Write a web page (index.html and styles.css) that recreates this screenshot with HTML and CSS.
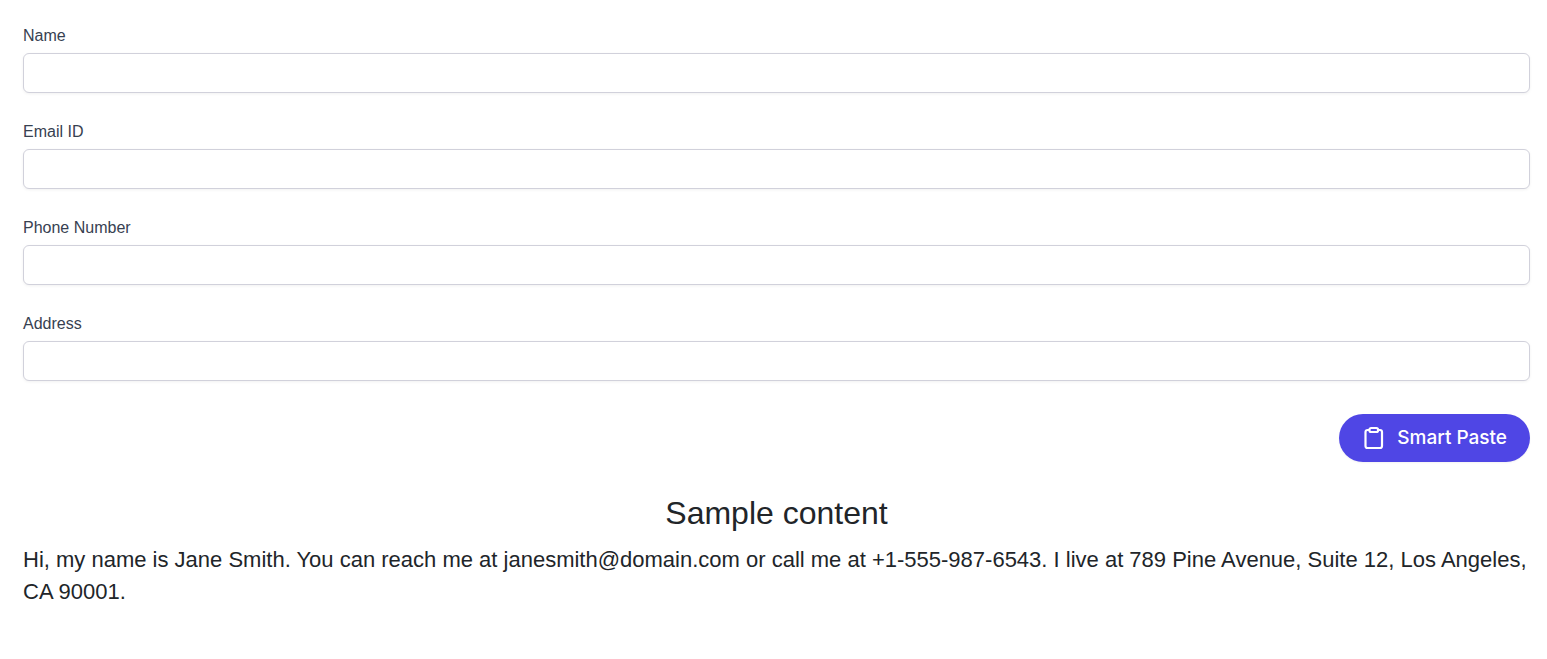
FILE: index.html
```html
<!DOCTYPE html>
<html lang="en">
<head>
<meta charset="utf-8">
<title>Smart Paste</title>
<link rel="stylesheet" href="styles.css">
</head>
<body>
<main class="page">
  <form class="form">
    <div class="field"><label class="label" for="name">Name</label><input class="input" id="name" type="text"></div>
    <div class="field"><label class="label" for="email">Email ID</label><input class="input" id="email" type="email"></div>
    <div class="field"><label class="label" for="phone">Phone Number</label><input class="input" id="phone" type="tel"></div>
    <div class="field"><label class="label" for="address">Address</label><input class="input" id="address" type="text"></div>
    <button class="paste" type="button">
      <svg class="icon" viewBox="0 0 24 24" fill="none" stroke="currentColor" stroke-width="2.200" aria-hidden="true">
        <path d="M8 4H5.500a2 2 0 0 0-2 2V20a2 2 0 0 0 2 2h12.500a2 2 0 0 0 2-2V6a2 2 0 0 0-2-2H15.500"/>
        <rect x="7.500" y="2" width="8.500" height="4" rx="1.600"/>
      </svg>
      <span>Smart Paste</span>
    </button>
  </form>
  <section>
    <h2 class="title">Sample content</h2>
    <p class="sample">Hi, my name is Jane Smith. You can reach me at janesmith@domain.com or call me at +1-555-987-6543. I live at 789 Pine Avenue, Suite 12, Los Angeles, CA 90001.</p>
  </section>
</main>
</body>
</html>
```
FILE: styles.css
```css
* { box-sizing: border-box; }
body {
  margin: 0;
  background: #fff;
  color: #212529;
  font-family: "Liberation Sans", Arial, sans-serif;
}
.page { padding: 24px 17px 24px 23px; }
.form {
  display: flex;
  flex-direction: column;
  gap: 27px;
}
.field {
  display: flex;
  flex-direction: column;
  gap: 5px;
}
.label {
  font-size: 16px;
  line-height: 24px;
  color: #374151;
}
.input {
  width: 100%;
  height: 40px;
  padding: 8px 12px;
  border: 1px solid #d1d1db;
  border-radius: 6px;
  background: #fff;
  box-shadow: 0 1px 3px rgba(0, 0, 0, 0.06);
  font: inherit;
}
.paste {
  display: flex;
  align-items: center;
  align-self: flex-end;
  gap: 11px;
  height: 48px;
  margin-top: 6px;
  padding: 0 23px;
  border: 0;
  border-radius: 24px;
  background: #4f46e5;
  box-shadow: 0 1px 2px rgba(0, 0, 0, 0.05);
  color: #fff;
  font: 500 19px/28px Inter, sans-serif;
}
.icon {
  width: 24px;
  height: 24px;
}
.title {
  margin: 32px 0 12px;
  font-size: 32px;
  font-weight: 400;
  line-height: 38px;
  text-align: center;
}
.sample {
  margin: 0;
  font-size: 22px;
  line-height: 32px;
}
```
